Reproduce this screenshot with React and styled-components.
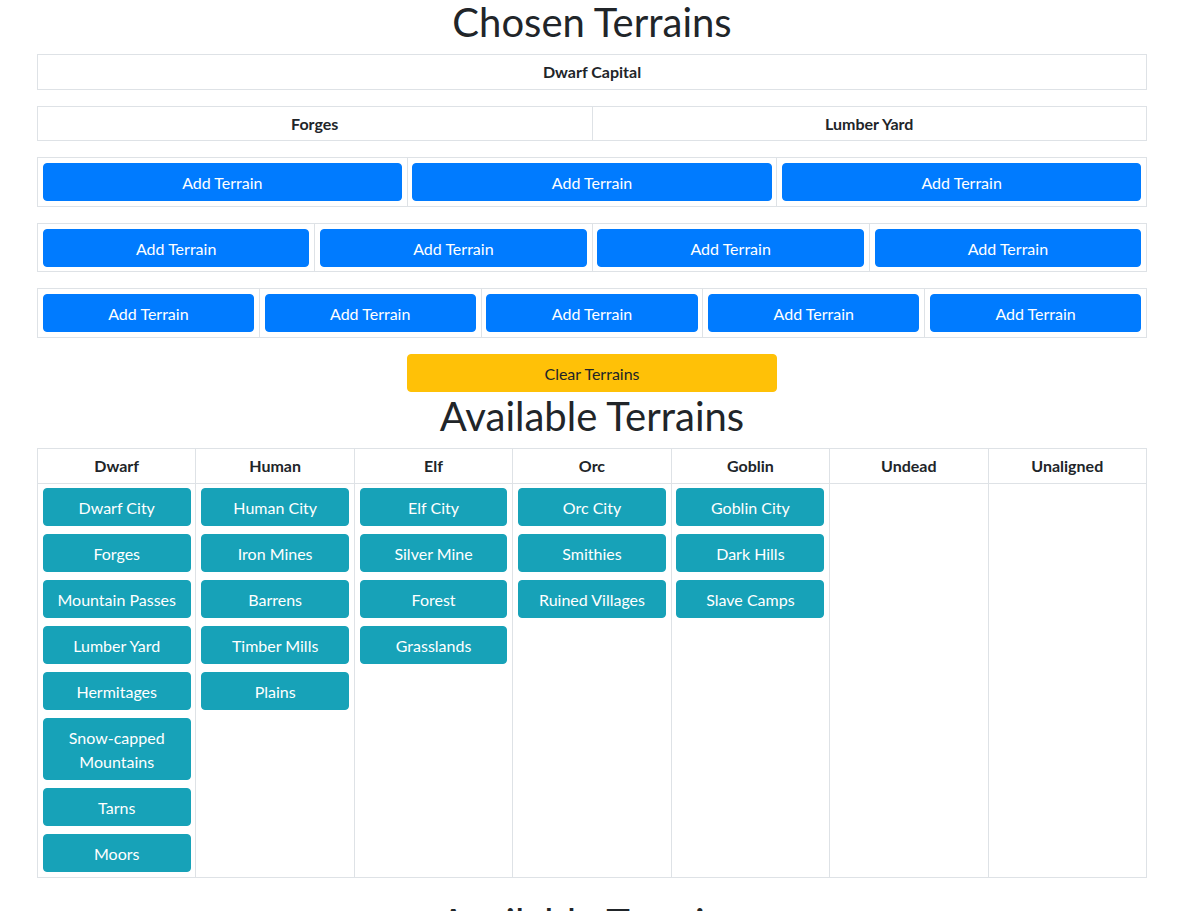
import React from "react";
import styled, { createGlobalStyle } from "styled-components";

const GlobalStyle = createGlobalStyle`
  *, *::before, *::after { box-sizing: border-box; }
  body {
    margin: 0;
    font-family: "Lato", "Open Sans", "Liberation Sans", sans-serif;
    font-size: 16px;
    line-height: 1.5;
    color: #212529;
    background: #fff;
  }
`;

const Container = styled.div`
  width: 1110px;
  margin: -2px 0 0 37px;
`;

const Title = styled.h1`
  margin: ${p => p.$top || 0}px 0 8px;
  font-size: 40px;
  font-weight: 400;
  line-height: 1.2;
  text-align: center;
`;

const Table = styled.table`
  width: 100%;
  border-collapse: collapse;
  table-layout: fixed;
  margin-bottom: 16px;
`;

const Head = styled.th`
  border: 1px solid #dee2e6;
  padding: 5px 4.8px 4.6px;
  text-align: center;
  font-weight: 700;
`;

const Cell = styled.td`
  border: 1px solid #dee2e6;
  padding: 4.8px;
  vertical-align: top;
`;

const Button = styled.button`
  display: block;
  width: 100%;
  padding: 7px 12px 5px;
  font-family: inherit;
  font-size: 16px;
  line-height: 1.5;
  text-align: center;
  border: 1px solid ${p => p.$bg};
  border-radius: 4px;
  background: ${p => p.$bg};
  color: ${p => p.$fg};
  cursor: pointer;
`;

const ClearRow = styled.div`
  display: flex;
  justify-content: center;
`;

const ClearButton = styled(Button)`
  width: 370px;
`;

const Stack = styled.div`
  display: flex;
  flex-direction: column;
  gap: 8px;
`;

const slotRows = [3, 4, 5];

const races = [
  { name: "Dwarf", terrains: ["Dwarf City", "Forges", "Mountain Passes", "Lumber Yard", "Hermitages", "Snow-capped Mountains", "Tarns", "Moors"] },
  { name: "Human", terrains: ["Human City", "Iron Mines", "Barrens", "Timber Mills", "Plains"] },
  { name: "Elf", terrains: ["Elf City", "Silver Mine", "Forest", "Grasslands"] },
  { name: "Orc", terrains: ["Orc City", "Smithies", "Ruined Villages"] },
  { name: "Goblin", terrains: ["Goblin City", "Dark Hills", "Slave Camps"] },
  { name: "Undead", terrains: [] },
  { name: "Unaligned", terrains: [] },
];

export default function App() {
  return (
    <>
      <GlobalStyle />
      <Container>
        <Title>Chosen Terrains</Title>
        <Table>
          <tbody>
            <tr><Head>Dwarf Capital</Head></tr>
          </tbody>
        </Table>
        <Table>
          <tbody>
            <tr><Head>Forges</Head><Head>Lumber Yard</Head></tr>
          </tbody>
        </Table>
        {slotRows.map(n => (
          <Table key={n}>
            <tbody>
              <tr>
                {Array.from({ length: n }).map((_, i) => (
                  <Cell key={i}>
                    <Button $bg="#007bff" $fg="#fff">Add Terrain</Button>
                  </Cell>
                ))}
              </tr>
            </tbody>
          </Table>
        ))}
        <ClearRow>
          <ClearButton $bg="#ffc107" $fg="#212529">Clear Terrains</ClearButton>
        </ClearRow>
        <Title>Available Terrains</Title>
        <Table>
          <thead>
            <tr>{races.map(r => <Head key={r.name}>{r.name}</Head>)}</tr>
          </thead>
          <tbody>
            <tr>
              {races.map(r => (
                <Cell key={r.name}>
                  <Stack>
                    {r.terrains.map(t => (
                      <Button key={t} $bg="#17a2b8" $fg="#fff">{t}</Button>
                    ))}
                  </Stack>
                </Cell>
              ))}
            </tr>
          </tbody>
        </Table>
        <Title $top={21}>Available Terrains</Title>
      </Container>
    </>
  );
}
